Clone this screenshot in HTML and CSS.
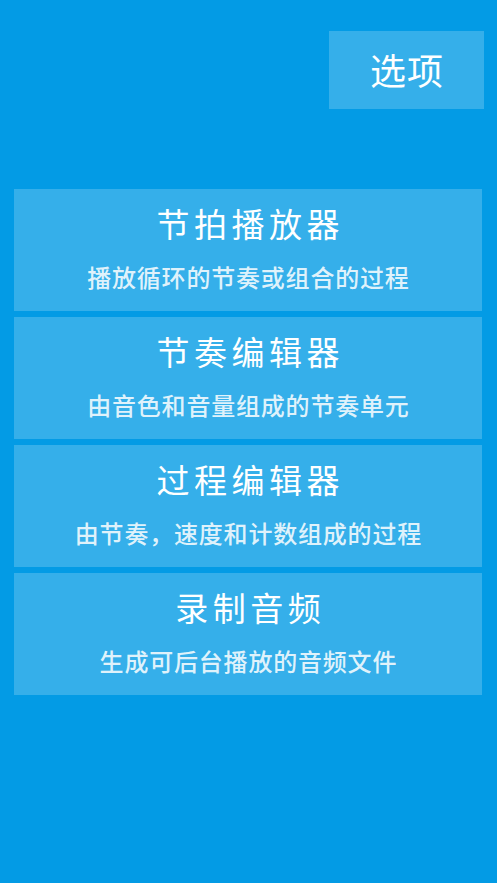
FILE: index.html
```html
<!DOCTYPE html>
<html lang="zh-CN">
<head>
<meta charset="utf-8">
<title>节拍器</title>
<link rel="stylesheet" href="styles.css">
</head>
<body>
<div class="screen">
  <header class="top">
    <button class="options">选项</button>
  </header>
  <main class="menu">
    <div class="card">
      <div class="title">节拍播放器</div>
      <div class="sub">播放循环的节奏或组合的过程</div>
    </div>
    <div class="card">
      <div class="title">节奏编辑器</div>
      <div class="sub">由音色和音量组成的节奏单元</div>
    </div>
    <div class="card">
      <div class="title">过程编辑器</div>
      <div class="sub">由节奏，速度和计数组成的过程</div>
    </div>
    <div class="card">
      <div class="title">录制音频</div>
      <div class="sub">生成可后台播放的音频文件</div>
    </div>
  </main>
</div>
</body>
</html>
```
FILE: styles.css
```css
html, body {
  margin: 0;
  padding: 0;
  background: #039be5;
}
body {
  font-family: "Noto Sans CJK SC", "Noto Sans", sans-serif;
  color: #ffffff;
}
.screen {
  width: 497px;
  min-height: 883px;
  background: #039be5;
}
.top {
  display: flex;
  justify-content: flex-end;
  padding: 31px 13px 0 0;
}
.options {
  width: 155px;
  height: 78px;
  border: none;
  margin: 0;
  background: #35afea;
  color: #ffffff;
  font-family: "Noto Sans CJK SC", "Noto Sans", sans-serif;
  font-size: 36px;
  letter-spacing: 1px;
  padding: 0 0 2px 1px;
  line-height: 1;
}
.menu {
  display: flex;
  flex-direction: column;
  gap: 6px;
  padding: 80px 15px 0 14px;
}
.card {
  height: 122px;
  box-sizing: border-box;
  background: #35afea;
  display: flex;
  flex-direction: column;
  align-items: center;
  padding-top: 16px;
}
.title {
  font-size: 33px;
  line-height: 36px;
  letter-spacing: 4.5px;
  padding-left: 4.5px;
  color: #ffffff;
}
.sub {
  margin-top: 22px;
  font-size: 24px;
  line-height: 28px;
  letter-spacing: 0.8px;
  padding-left: 0.8px;
  font-weight: 500;
  color: rgba(255, 255, 255, 0.86);
}
```
